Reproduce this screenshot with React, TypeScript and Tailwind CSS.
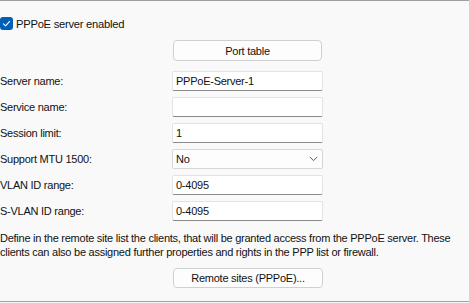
import React from 'react';

const font = { fontFamily: '"Liberation Sans", Arial, sans-serif' };

const Field: React.FC<{ label: string; value?: string }> = ({ label, value = '' }) => (
  <div className="flex items-center h-[20px]">
    <div className="w-[172px] shrink-0">{label}</div>
    <div className="w-[151px] h-[20px] bg-white border border-[#e3e3e3] border-b-[#8a8a8a] rounded-[2px] flex items-center pl-[3px]">
      {value}
    </div>
  </div>
);

export default function App() {
  return (
    <div className="w-[469px] h-[303px] bg-[#f9f9f9]" style={font}>
      <div className="h-[302px] border-t border-b border-[#a0a0a0] text-[11px] tracking-[-0.25px] text-[#111] leading-[14px] flex flex-col">
        <div className="mt-[16px] flex items-center h-[13px]">
          <div className="w-[13px] h-[13px] rounded-[3px] bg-[#005fb8] flex items-center justify-center">
            <svg width="9" height="9" viewBox="0 0 9 9" fill="none">
              <path d="M1.5 4.8 L3.6 6.8 L7.6 2.4" stroke="white" strokeWidth="1.1" strokeLinecap="round" strokeLinejoin="round" />
            </svg>
          </div>
          <span className="ml-[3px] text-[11.2px]">PPPoE server enabled</span>
        </div>

        <div className="mt-[10px] pl-[173px]">
          <button className="w-[149px] h-[21px] bg-[#fdfdfd] border border-[#d0d0d0] rounded-[4px] flex items-center justify-center">
            Port table
          </button>
        </div>

        <div className="mt-[10px] flex flex-col gap-[6px]">
          <Field label="Server name:" value="PPPoE-Server-1" />
          <Field label="Service name:" />
          <Field label="Session limit:" value="1" />
          <div className="flex items-center h-[20px]">
            <div className="w-[172px] shrink-0">Support MTU 1500:</div>
            <div className="w-[151px] h-[20px] bg-[#fdfdfd] border border-[#d6d6d6] rounded-[2px] flex items-center justify-between pl-[3px] pr-[4px]">
              <span>No</span>
              <svg width="9" height="6" viewBox="0 0 9 6" fill="none">
                <path d="M0.8 1 L4.5 4.6 L8.2 1" stroke="#5a5a5a" strokeWidth="1" />
              </svg>
            </div>
          </div>
          <Field label="VLAN ID range:" value="0-4095" />
          <Field label="S-VLAN ID range:" value="0-4095" />
        </div>

        <p className="mt-[10px] w-[469px]">
          Define in the remote site list the clients, that will be granted access from the PPPoE server. These clients can also be assigned further properties and rights in the PPP list or firewall.
        </p>

        <div className="mt-[9px] pl-[173px]">
          <button className="w-[150px] h-[20px] bg-[#fdfdfd] border border-[#d0d0d0] rounded-[4px] flex items-center justify-center">
            Remote sites (PPPoE)...
          </button>
        </div>
      </div>
    </div>
  );
}
